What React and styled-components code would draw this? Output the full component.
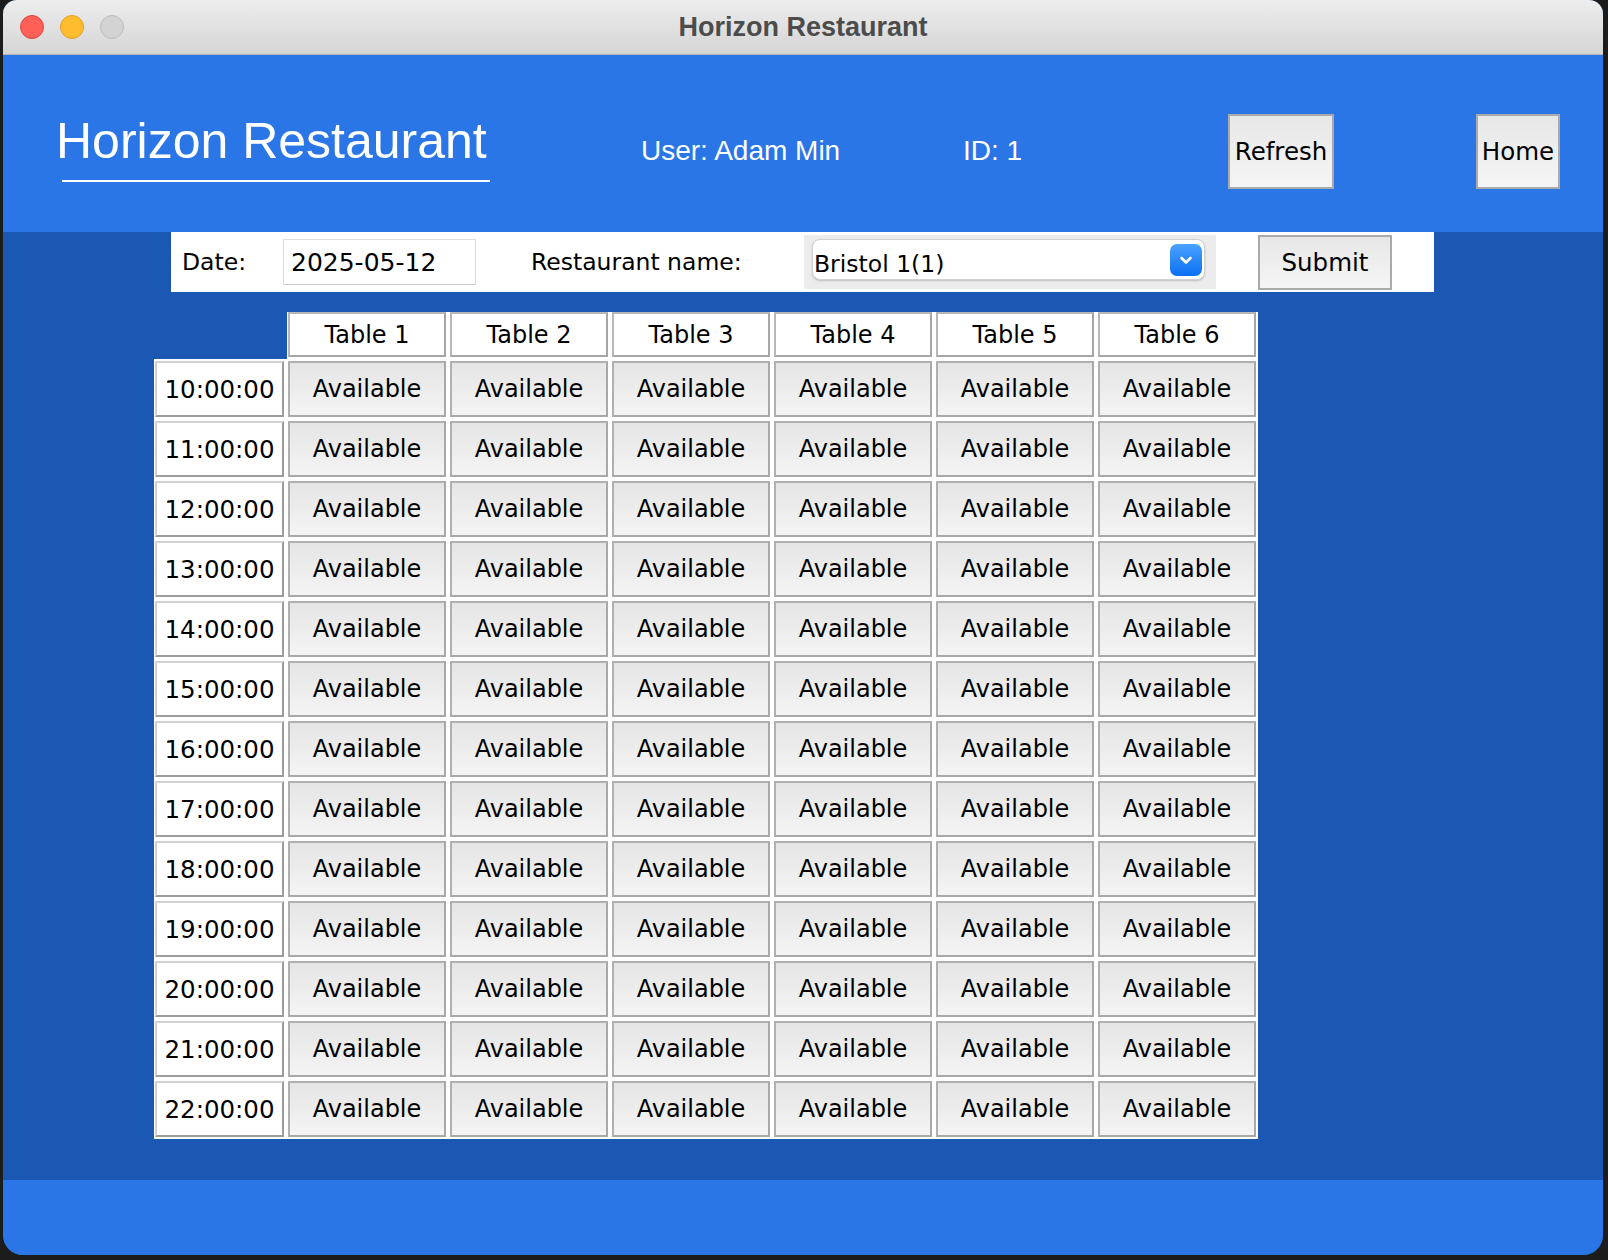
import React from "react";
import styled, { createGlobalStyle } from "styled-components";

const GlobalStyle = createGlobalStyle`
  html, body {
    margin: 0;
    padding: 0;
    background: #1c1c1c;
  }
  body {
    width: 1608px;
    height: 1260px;
    overflow: hidden;
  }
  * {
    box-sizing: border-box;
  }
`;

const UI_FONT = `"DejaVu Sans", "Liberation Sans", sans-serif`;
const HEAD_FONT = `"Liberation Sans", Arial, sans-serif`;

const Desktop = styled.div`
  width: 1608px;
  height: 1260px;
  padding-left: 3px;
  background: #1c1c1c;
`;

const Window = styled.div`
  width: 1600px;
  height: 1255px;
  border-radius: 14px 14px 20px 20px;
  overflow: hidden;
  display: flex;
  flex-direction: column;
  background: #1a58b3;
`;

/* ------- Title bar ------- */
const TitleBar = styled.div`
  height: 55px;
  flex: none;
  display: grid;
  grid-template-columns: 1fr auto 1fr;
  align-items: center;
  background: linear-gradient(#ededed, #d5d5d5);
  border-bottom: 1px solid #b4b4b4;
`;

const Lights = styled.div`
  display: flex;
  gap: 16px;
  padding-left: 17px;
`;

const Light = styled.span`
  width: 24px;
  height: 24px;
  border-radius: 50%;
  background: ${(p) => p.$fill};
  border: 1px solid ${(p) => p.$edge};
`;

const WindowTitle = styled.div`
  font-family: ${HEAD_FONT};
  font-weight: 700;
  font-size: 27px;
  color: #4c4c4c;
`;

/* ------- Header ------- */
const Header = styled.header`
  height: 177px;
  flex: none;
  background: #2a76e6;
  display: flex;
  align-items: center;
  padding: 15px 0 0 53px;
`;

const TitleBlock = styled.div`
  width: 434px;
  display: flex;
  flex-direction: column;
  padding-bottom: 5px;
`;

const BrandTitle = styled.h1`
  margin: 0 0 14px;
  font-family: ${HEAD_FONT};
  font-weight: 400;
  font-size: 50px;
  line-height: 50px;
  color: #ffffff;
  white-space: nowrap;
`;

const Underline = styled.div`
  margin-left: 6px;
  width: 428px;
  height: 2px;
  background: #ffffff;
`;

const HeaderLabel = styled.div`
  width: ${(p) => p.$width}px;
  margin-left: ${(p) => p.$offset || 0}px;
  font-family: ${HEAD_FONT};
  font-size: 28px;
  line-height: 32px;
  color: #ffffff;
  white-space: nowrap;
`;

const GreyButton = styled.button`
  width: ${(p) => p.$width}px;
  height: ${(p) => p.$height}px;
  margin-left: ${(p) => p.$offset || 0}px;
  padding: 0;
  border: 2px solid #aaaaaa;
  background: linear-gradient(#e7e7e7, #f5f5f5);
  font-family: ${UI_FONT};
  font-size: 24.5px;
  color: #000000;
  display: flex;
  align-items: center;
  justify-content: center;
  cursor: pointer;
`;

/* ------- Main area ------- */
const Main = styled.main`
  flex: 1;
  display: flex;
  flex-direction: column;
  align-items: flex-start;
  background: #1a58b3;
`;

const FormBar = styled.div`
  margin-left: 168px;
  width: 1263px;
  height: 60px;
  background: #ffffff;
  display: flex;
  align-items: center;
`;

const FieldLabel = styled.label`
  width: ${(p) => p.$width}px;
  margin-left: ${(p) => p.$offset || 0}px;
  font-family: ${UI_FONT};
  font-size: 23.5px;
  color: #000000;
  white-space: nowrap;
`;

const DateInput = styled.div`
  width: 193px;
  height: 46px;
  border: 1px solid #dddddd;
  border-bottom-color: #c9c9c9;
  padding-left: 7px;
  display: flex;
  align-items: center;
  font-family: ${UI_FONT};
  font-size: 25px;
  color: #000000;
`;

const SelectWrap = styled.div`
  width: 412px;
  height: 54px;
  background: #ececec;
  padding: 4px 11px 9px 8px;
  display: flex;
`;

const SelectBox = styled.div`
  flex: 1;
  background: #ffffff;
  border: 1px solid #d2d2d2;
  border-radius: 8px;
  box-shadow: 0 1px 2px rgba(0, 0, 0, 0.2);
  display: flex;
  align-items: center;
  justify-content: space-between;
  padding: 0 2px 0 1px;
`;

const SelectText = styled.span`
  padding-top: 8px;
  font-family: ${UI_FONT};
  font-size: 23.5px;
  color: #000000;
`;

const ChevronBox = styled.span`
  width: 32px;
  height: 32px;
  border-radius: 7px;
  background: linear-gradient(#4aa2ff, #0b6ff1);
  display: flex;
  align-items: center;
  justify-content: center;
`;

/* ------- Booking grid ------- */
const Schedule = styled.div`
  margin: 20px 0 0 151px;
  display: flex;
  flex-direction: column;
  align-items: flex-start;
`;

const HeaderRow = styled.div`
  margin-left: 133px;
  display: flex;
  gap: 4px;
  padding: 0 2px 2px 1px;
  background: #ffffff;
`;

const Cell = styled.div`
  height: ${(p) => p.$height || 56}px;
  display: flex;
  align-items: center;
  justify-content: center;
  font-family: ${UI_FONT};
  font-size: 24px;
  color: #000000;
  white-space: nowrap;
  border: 2px solid;
`;

const HeadCell = styled(Cell)`
  width: 158px;
  background: #ffffff;
  border-color: #b8b8b8 #a6a6a6 #a6a6a6 #b8b8b8;
`;

const BodyGrid = styled.div`
  display: grid;
  grid-template-columns: 129px repeat(6, 158px);
  gap: 4px;
  padding: 2px 2px 2px 1px;
  background: #ffffff;
`;

const TimeCell = styled(Cell)`
  background: #ffffff;
  font-size: 24.5px;
  border-color: #d2d2d2 #9c9c9c #9c9c9c #d2d2d2;
`;

const SlotCell = styled(Cell)`
  background: linear-gradient(#e5e5e5, #f4f4f4);
  border-color: #b0b0b0 #a8a8a8 #a8a8a8 #b0b0b0;
`;

const Footer = styled.footer`
  height: 75px;
  flex: none;
  background: #2a76e6;
`;

const tables = [1, 2, 3, 4, 5, 6];
const hours = [10, 11, 12, 13, 14, 15, 16, 17, 18, 19, 20, 21, 22];

export default function App() {
  return (
    <Desktop>
      <GlobalStyle />
      <Window>
        <TitleBar>
          <Lights>
            <Light $fill="#fe5f57" $edge="#e2463f" />
            <Light $fill="#febc2e" $edge="#dfa023" />
            <Light $fill="#d3d3d3" $edge="#bcbcbc" />
          </Lights>
          <WindowTitle>Horizon Restaurant</WindowTitle>
          <div />
        </TitleBar>

        <Header>
          <TitleBlock>
            <BrandTitle>Horizon Restaurant</BrandTitle>
            <Underline />
          </TitleBlock>
          <HeaderLabel $width={322} $offset={151}>
            User: Adam Min
          </HeaderLabel>
          <HeaderLabel $width={265}>ID: 1</HeaderLabel>
          <GreyButton type="button" $width={106} $height={75}>
            Refresh
          </GreyButton>
          <GreyButton type="button" $width={84} $height={75} $offset={142}>
            Home
          </GreyButton>
        </Header>

        <Main>
          <FormBar>
            <FieldLabel $width={101} $offset={11}>
              Date:
            </FieldLabel>
            <DateInput>2025-05-12</DateInput>
            <FieldLabel $width={273} $offset={55}>
              Restaurant name:
            </FieldLabel>
            <SelectWrap>
              <SelectBox>
                <SelectText>Bristol 1(1)</SelectText>
                <ChevronBox>
                  <svg width="18" height="18" viewBox="0 0 18 18">
                    <path
                      d="M4.5 7l4.5 4.5L13.5 7"
                      fill="none"
                      stroke="#ffffff"
                      strokeWidth="2.6"
                      strokeLinecap="round"
                      strokeLinejoin="round"
                    />
                  </svg>
                </ChevronBox>
              </SelectBox>
            </SelectWrap>
            <GreyButton type="button" $width={134} $height={55} $offset={42}>
              Submit
            </GreyButton>
          </FormBar>

          <Schedule>
            <HeaderRow>
              {tables.map((t) => (
                <HeadCell key={t} $height={45}>
                  Table {t}
                </HeadCell>
              ))}
            </HeaderRow>
            <BodyGrid>
              {hours.map((h) => (
                <React.Fragment key={h}>
                  <TimeCell>{h}:00:00</TimeCell>
                  {tables.map((t) => (
                    <SlotCell key={t}>Available</SlotCell>
                  ))}
                </React.Fragment>
              ))}
            </BodyGrid>
          </Schedule>
        </Main>

        <Footer />
      </Window>
    </Desktop>
  );
}
